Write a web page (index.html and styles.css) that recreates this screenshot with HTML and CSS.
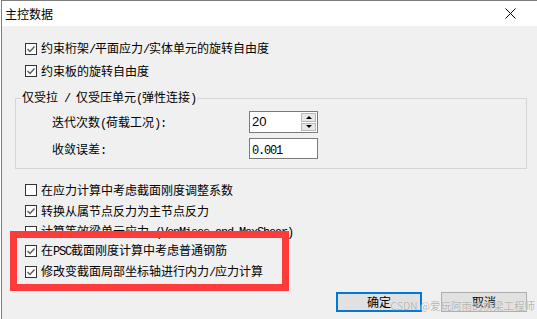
FILE: index.html
```html
<!DOCTYPE html>
<html lang="zh-CN">

<head>
    <meta charset="UTF-8">
    <meta name="viewport" content="width=device-width, initial-scale=1.0">
    <title>主控数据</title>

    <link rel="stylesheet" href="styles.css">
</head>

<body>
    <div class="window">
        <div class="title-bar">
            <span class="title">主控数据</span>
            <svg class="close" width="11" height="11" viewBox="0 0 11 11">
                <path d="M0.5 0.5 L10.5 10.5 M10.5 0.5 L0.5 10.5" stroke="#000" stroke-width="1" fill="none" />
            </svg>
        </div>

        <div class="content">
            <div class="top-list">
                <div class="check-row">
                    <span class="box"><svg viewBox="0 0 10 10"><path d="M1.5 5 L4 7.5 L8.5 2.5" /></svg></span>
                    <span>约束桁架<span class="en">/</span>平面应力<span class="en">/</span>实体单元的旋转自由度</span>
                </div>
                <div class="check-row">
                    <span class="box"><svg viewBox="0 0 10 10"><path d="M1.5 5 L4 7.5 L8.5 2.5" /></svg></span>
                    <span>约束板的旋转自由度</span>
                </div>
            </div>

            <fieldset class="group">
                <legend>仅受拉<span class="en"> / </span>仅受压单元<span class="en">(</span>弹性连接<span class="en">)</span></legend>
                <div class="field-row">
                    <span class="field-label">迭代次数<span class="en">(</span>荷载工况<span class="en">):</span></span>
                    <div class="spin">
                        <span class="value num">20</span>
                        <div class="arrows">
                            <span class="arrow up"></span>
                            <span class="arrow down"></span>
                        </div>
                    </div>
                </div>
                <div class="field-row second">
                    <span class="field-label">收敛误差<span class="en">:</span></span>
                    <div class="text-input"><span class="en">0.001</span></div>
                </div>
            </fieldset>

            <div class="check-row">
                <span class="box"></span>
                <span>在应力计算中考虑截面刚度调整系数</span>
            </div>
            <div class="check-row">
                <span class="box"><svg viewBox="0 0 10 10"><path d="M1.5 5 L4 7.5 L8.5 2.5" /></svg></span>
                <span>转换从属节点反力为主节点反力</span>
            </div>
            <div class="check-row">
                <span class="box"></span>
                <span>计算等效梁单元应力<span class="en"> (VonMises and MaxShear)</span></span>
            </div>

            <!-- 红框标注 -->
            <div class="mark">
                <div class="check-row">
                    <span class="box"><svg viewBox="0 0 10 10"><path d="M1.5 5 L4 7.5 L8.5 2.5" /></svg></span>
                    <span>在<span class="en">PSC</span>截面刚度计算中考虑普通钢筋</span>
                </div>
                <div class="check-row">
                    <span class="box"><svg viewBox="0 0 10 10"><path d="M1.5 5 L4 7.5 L8.5 2.5" /></svg></span>
                    <span>修改变截面局部坐标轴进行内力<span class="en">/</span>应力计算</span>
                </div>
            </div>

            <div class="buttons">
                <button class="btn primary">确定</button>
                <button class="btn">取消</button>
            </div>
        </div>

        <div class="watermark">CSDN @爱玩阿雨的桥梁工程师</div>
    </div>
</body>

</html>
```

FILE: styles.css
```css
* {
    margin: 0;
    padding: 0;
    box-sizing: border-box;
}

body {
    font-family: "Noto Sans CJK SC", sans-serif;
    font-size: 12px;
    color: #000;
    background: #fff;
}

.en {
    font-family: "Liberation Mono", monospace;
    letter-spacing: -1.2px;
}

.window {
    position: relative;
    margin-left: 1px;
    width: 536px;
    height: 319px;
    border-left: 1px solid #7f7f7f;
    border-top: 1px solid #7f7f7f;
    display: flex;
    flex-direction: column;
}

.title-bar {
    height: 25px;
    background: #fff;
    display: flex;
    align-items: center;
    justify-content: space-between;
    padding: 0 21px 0 3px;
}

.content {
    flex: 1;
    background: #f0f0f0;
    padding: 12px 10px 0 23px;
}

.check-row {
    display: flex;
    align-items: center;
    gap: 4px;
    height: 21px;
    line-height: 16px;
}

.top-list .check-row {
    height: 22px;
}

.box {
    width: 12px;
    height: 12px;
    border: 1px solid #333;
    background: #fff;
    display: flex;
}

.box svg {
    width: 10px;
    height: 10px;
}

.box path {
    fill: none;
    stroke: #5a5a5a;
    stroke-width: 1.4;
}

.group {
    margin: 7px 0 10px -10px;
    width: 512px;
    border: 1px solid #d5d5d5;
    padding: 4px 0 9px 5px;
}

.group legend {
    padding: 0 1px;
    line-height: 16px;
}

.field-row {
    display: flex;
    align-items: center;
    margin-left: 31px;
    height: 22px;
}

.field-row.second {
    margin-top: 5px;
    height: 21px;
}

.field-label {
    width: 197px;
}

.spin {
    width: 69px;
    height: 22px;
    border: 1px solid #7a7a7a;
    background: #fff;
    display: flex;
}

.spin .value {
    flex: 1;
    padding-left: 2px;
    line-height: 19px;
    font-family: "Liberation Sans", sans-serif;
    font-size: 13px;
}

.arrows {
    width: 16px;
    display: flex;
    flex-direction: column;
    gap: 1px;
    padding: 1px 1px 1px 0;
}

.arrow {
    flex: 1;
    border: 1px solid #b9b9b9;
    background: #e8e8e8;
    display: flex;
    align-items: center;
    justify-content: center;
}

.arrow::after {
    content: "";
    border-left: 3px solid transparent;
    border-right: 3px solid transparent;
}

.arrow.up::after {
    border-bottom: 3px solid #000;
}

.arrow.down::after {
    border-top: 3px solid #000;
}

.text-input {
    width: 69px;
    height: 21px;
    border: 1px solid #7a7a7a;
    background: #fff;
    padding-left: 2px;
    line-height: 19px;
}

.mark {
    position: relative;
    margin: -11px 0 0 -15px;
    width: 279px;
    border: 7px solid #fe3b3b;
    padding: 2px 0 2px 8px;
}

.buttons {
    display: flex;
    justify-content: flex-end;
    gap: 19px;
    margin-top: 1px;
}

.btn {
    width: 86px;
    height: 20px;
    font: inherit;
    font-size: 12px;
    line-height: 16px;
    background: #e1e1e1;
    border: 1px solid #adadad;
}

.btn.primary {
    border: 2px solid #0078d7;
}

.watermark {
    position: absolute;
    right: 2px;
    bottom: 7px;
    font-size: 10.5px;
    line-height: 13px;
    color: rgba(140, 140, 140, 0.65);
    text-shadow: 0 0 1px #fff;
}
```
